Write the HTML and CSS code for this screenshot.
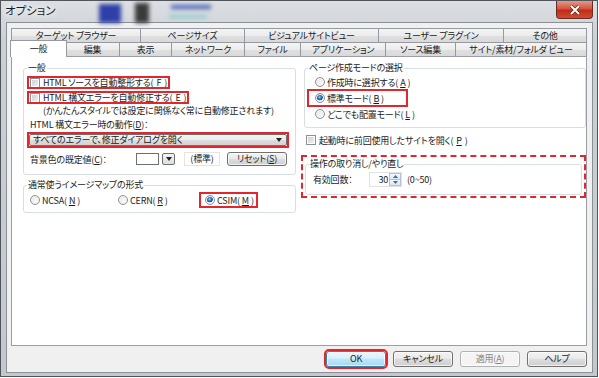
FILE: index.html
```html
<!DOCTYPE html>
<html lang="ja">
<head>
    <meta charset="UTF-8">
    <title>オプション</title>
    <link rel="stylesheet" href="styles.css">
</head>
<body>
    <div class="window">
        <!-- things seen through the glass frame -->
        <span class="behind b1"></span>
        <span class="behind b2"></span>
        <span class="behind b3"></span>
        <span class="behind b4"></span>

        <div class="titlebar">
            <span class="title">オプション</span>
            <span class="close">
                <svg width="12" height="10" viewBox="0 0 12 10"><path d="M2 1 L10 9 M10 1 L2 9" stroke="#5a1a12" stroke-width="3.2"/><path d="M2 1 L10 9 M10 1 L2 9" stroke="#fff" stroke-width="2"/></svg>
            </span>
        </div>

        <div class="client">
            <div class="tabrow back">
                <div class="tab">ターゲット ブラウザー</div>
                <div class="tab">ページサイズ</div>
                <div class="tab">ビジュアルサイトビュー</div>
                <div class="tab">ユーザー プラグイン</div>
                <div class="tab">その他</div>
            </div>
            <div class="tabrow front">
                <div class="tab active">一般</div>
                <div class="tab">編集</div>
                <div class="tab">表示</div>
                <div class="tab">ネットワーク</div>
                <div class="tab">ファイル</div>
                <div class="tab">アプリケーション</div>
                <div class="tab">ソース編集</div>
                <div class="tab">サイト/素材/フォルダ ビュー</div>
            </div>

            <div class="panel">
                <div class="col">
                    <fieldset class="group general">
                        <legend>一般</legend>
                        <div class="check mark"><i class="cb"></i>HTML ソースを自動整形する(<u>F</u>)</div>
                        <div class="check mark second"><i class="cb"></i>HTML 構文エラーを自動修正する(<u>E</u>)</div>
                        <div class="note">(かんたんスタイルでは設定に関係なく常に自動修正されます)</div>
                        <div class="caption">HTML 構文エラー時の動作(<u>D</u>)：</div>
                        <div class="select-wrap mark">
                            <div class="select">
                                <span>すべてのエラーで、修正ダイアログを開く</span>
                                <svg width="6" height="4" viewBox="0 0 6 4"><path d="M0 0 H6 L3 4 Z" fill="#222"/></svg>
                            </div>
                        </div>
                        <div class="bgrow">
                            <span class="lbl">背景色の既定値(<u>C</u>)：</span>
                            <span class="swatch"></span>
                            <span class="drop"><svg width="6" height="4" viewBox="0 0 6 4"><path d="M0 0 H6 L3 4 Z" fill="#222"/></svg></span>
                            <span class="std">(標準)</span>
                            <span class="btn reset">リセット(<u>S</u>)</span>
                        </div>
                    </fieldset>

                    <fieldset class="group map">
                        <legend>通常使うイメージマップの形式</legend>
                        <div class="radios">
                            <div class="radio"><i class="rb"></i>NCSA(<u>N</u>)</div>
                            <div class="radio"><i class="rb"></i>CERN(<u>R</u>)</div>
                            <div class="radio csim mark"><i class="rb on"></i>CSIM(<u>M</u>)</div>
                        </div>
                    </fieldset>
                </div>

                <div class="col">
                    <fieldset class="group mode">
                        <legend>ページ作成モードの選択</legend>
                        <div class="radio"><i class="rb"></i>作成時に選択する(<u>A</u>)</div>
                        <div class="radio std-mode mark"><i class="rb on"></i>標準モード(<u>B</u>)</div>
                        <div class="radio"><i class="rb"></i>どこでも配置モード(<u>L</u>)</div>
                    </fieldset>

                    <div class="check startup"><i class="cb"></i>起動時に前回使用したサイトを開く(<u>P</u>)</div>

                    <div class="dashed">
                        <fieldset class="group undo">
                            <legend>操作の取り消し/やり直し</legend>
                            <div class="undo-row">
                                <span class="lbl">有効回数：</span>
                                <span class="spin">
                                    <span class="value">30</span>
                                    <span class="arrows">
                                        <span class="up"><svg width="5" height="3" viewBox="0 0 5 3"><path d="M0 3 H5 L2.5 0 Z" fill="#3d6aa8"/></svg></span>
                                        <span class="down"><svg width="5" height="3" viewBox="0 0 5 3"><path d="M0 0 H5 L2.5 3 Z" fill="#3d6aa8"/></svg></span>
                                    </span>
                                </span>
                                <span class="range">(0~50)</span>
                            </div>
                        </fieldset>
                    </div>
                </div>
            </div>

            <div class="actions">
                <span class="btn default mark">OK</span>
                <span class="btn">キャンセル</span>
                <span class="btn disabled">適用(<u>A</u>)</span>
                <span class="btn">ヘルプ</span>
            </div>
        </div>
    </div>
</body>
</html>
```

FILE: styles.css
```css
* {
    margin: 0;
    padding: 0;
    box-sizing: border-box;
}

body {
    width: 599px;
    height: 378px;
    overflow: hidden;
    background: #fff;
    font-family: "Noto Sans CJK JP", "Noto Sans", sans-serif;
    font-size: 9px;
    letter-spacing: -0.2px;
    font-feature-settings: "palt";
    color: #1a1a1a;
}

u {
    text-underline-offset: 1px;
}

/* window frame */

.window {
    position: relative;
    width: 598px;
    height: 377px;
    border: 1px solid #50555c;
    background: linear-gradient(to bottom, #dcdfe3, #cbd0d5 40px, #c4c8ce);
    display: flex;
    flex-direction: column;
    overflow: hidden;
}

.behind {
    position: absolute;
    filter: blur(2px);
}

.b1 {
    left: 98px;
    top: 3px;
    width: 22px;
    height: 19px;
    background: #2e3fa8;
}

.b2 {
    left: 134px;
    top: 2px;
    width: 14px;
    height: 20px;
    background: #3a3a3a;
}

.b3 {
    left: 170px;
    top: 4px;
    width: 40px;
    height: 4px;
    background: #4d63b8;
}

.b4 {
    left: 168px;
    top: 14px;
    width: 38px;
    height: 3px;
    background: #8ccbcc;
}

.titlebar {
    position: relative;
    height: 21px;
    display: flex;
    justify-content: space-between;
    align-items: flex-start;
    padding: 0 4px 0 4px;
}

.title {
    font-size: 11.5px;
    letter-spacing: 0;
    line-height: 19px;
    text-shadow: 0 0 5px #fff, 0 0 8px #fff;
}

.close {
    width: 37px;
    height: 18px;
    border: 1px solid #6b2a22;
    border-top: none;
    border-radius: 0 0 4px 4px;
    background: linear-gradient(to bottom, #e3988a, #d4553f 45%, #bf2d17 55%, #cf4d33);
    display: flex;
    align-items: center;
    justify-content: center;
}

.client {
    flex: 1;
    margin: 0 4px 3px 5px;
    border: 1px solid #8b9097;
    background: #f0f0f0;
    padding: 5px 5px 0 4px;
    display: flex;
    flex-direction: column;
}

/* tabs */

.tabrow {
    display: grid;
    height: 14px;
}

.tabrow.back {
    grid-template-columns: 130px 104px 134px 125px 1fr;
}

.tabrow.front {
    grid-template-columns: 55px 54px 52px 73px 56px 85px 70px 1fr;
}

.tab {
    border: 1px solid #959aa2;
    border-bottom: none;
    background: linear-gradient(to bottom, #f4f4f4, #ececec 50%, #e0e0e0 51%, #d9d9d9);
    text-align: center;
    line-height: 13px;
    white-space: nowrap;
    overflow: hidden;
}

.tab + .tab {
    margin-left: -1px;
}

.tab.active {
    position: relative;
    z-index: 2;
    margin: -2px -1px -1px -1px;
    background: #fff;
    line-height: 16px;
}

.panel {
    flex: 1;
    border: 1px solid #9a9ea6;
    background: #fff;
    display: grid;
    grid-template-columns: 273px 1fr;
    column-gap: 5px;
    align-content: start;
    padding: 5px 0 0 11px;
}

/* group boxes */

.group {
    border: 1px solid #d5dfe5;
    border-radius: 3px;
    min-width: 0;
}

.group legend {
    padding: 0 1px;
    line-height: 12px;
}

.general {
    padding: 2px 3px 8px;
}

.map {
    margin-top: 4px;
    padding: 2px 3px 5px;
}

.mode {
    margin-left: 3px;
    padding: 0 3px 5px;
}

.undo {
    padding: 2px 3px 7px;
}

.mark {
    outline: 2px solid #e2262c;
    outline-offset: -2px;
}

/* controls */

.check,
.radio {
    display: flex;
    align-items: center;
    width: max-content;
    white-space: nowrap;
}

.check {
    height: 13px;
    gap: 3px;
    padding: 0 3px;
}

.check.second {
    margin-top: 2px;
}

.radio {
    gap: 2px;
}

.cb {
    width: 10px;
    height: 10px;
    border: 1px solid #8e8f8f;
    background: linear-gradient(135deg, #c9ccd1, #f4f4f4);
    box-shadow: inset 0 0 0 1px #fff;
}

.rb {
    width: 10px;
    height: 10px;
    border: 1px solid #8e8f8f;
    border-radius: 50%;
    background: radial-gradient(circle at 60% 60%, #fdfdfd, #d6d8db);
    box-shadow: inset 0 0 0 1px #f6f6f6;
}

.rb.on {
    background: radial-gradient(circle at 45% 40%, #9ee0ff 0, #2a7cc8 1.6px, #13508f 3px, #e9ecef 3.4px, #f6f6f6);
}

.note {
    margin-left: 16px;
    line-height: 13px;
    white-space: nowrap;
}

.caption {
    margin-top: 1px;
    padding-left: 3px;
    line-height: 13px;
}

.select-wrap {
    margin: 1px 3px 0 0;
    padding: 2px;
    height: 16px;
}

.select {
    height: 12px;
    border: 1px solid #707070;
    border-radius: 2px;
    background: linear-gradient(to bottom, #f3f3f3, #ececec 50%, #dedede 51%, #d3d3d3);
    display: flex;
    align-items: center;
    justify-content: space-between;
    padding: 0 4px 0 3px;
    line-height: 10px;
}

.bgrow {
    margin-top: 4px;
    height: 14px;
    display: flex;
    align-items: center;
    padding-left: 3px;
}

.bgrow .lbl {
    width: 106px;
}

.swatch {
    width: 23px;
    height: 12px;
    border: 1px solid #707070;
    background: #fff;
}

.drop {
    width: 13px;
    height: 12px;
    margin-left: 3px;
    border: 1px solid #707070;
    border-radius: 2px;
    background: linear-gradient(to bottom, #f3f3f3, #dedede);
    display: flex;
    align-items: center;
    justify-content: center;
}

.std {
    margin-left: 9px;
    width: 36px;
    height: 14px;
    border: 1px solid #e4e4e4;
    text-align: center;
    line-height: 12px;
}

.btn {
    display: block;
    width: 60px;
    height: 16px;
    border: 1px solid #707070;
    border-radius: 3px;
    background: linear-gradient(to bottom, #f2f2f2, #ebebeb 45%, #dddddd 50%, #cfcfcf);
    box-shadow: inset 0 0 0 1px rgba(255, 255, 255, 0.7);
    text-align: center;
    line-height: 14px;
    white-space: nowrap;
}

.btn.reset {
    margin-left: 7px;
    height: 14px;
    line-height: 12px;
}

.radios {
    display: grid;
    grid-template-columns: 88px 82px auto;
    height: 14px;
    align-items: center;
    padding-left: 3px;
}

.radio.csim {
    height: 14px;
    padding: 0 3px 0 5px;
    outline-offset: -1px;
}

.mode .radio {
    height: 16px;
    padding-left: 7px;
}

.mode .std-mode {
    width: 99px;
    outline-offset: -1px;
}

.startup {
    margin: 6px 0 0 5px;
    height: 12px;
    padding: 0;
}

.dashed {
    margin-top: 9px;
    border: 2px dashed #e2262c;
    padding: 1px 2px;
}

.undo-row {
    display: flex;
    align-items: center;
    height: 15px;
    padding-left: 4px;
}

.undo-row .lbl {
    width: 56px;
}

.spin {
    display: flex;
    height: 15px;
    border: 1px solid #e2e3ea;
}

.spin .value {
    width: 19px;
    text-align: right;
    padding-right: 1px;
    line-height: 13px;
}

.arrows {
    width: 12px;
    display: flex;
    flex-direction: column;
}

.arrows span {
    flex: 1;
    display: flex;
    align-items: center;
    justify-content: center;
    border: 1px solid #b6c2d0;
    background: linear-gradient(to bottom, #f4f7fb, #dde5ef);
}

.arrows .down {
    border-top: none;
}

.range {
    margin-left: 5px;
}

/* dialog buttons */

.actions {
    display: flex;
    justify-content: flex-end;
    gap: 7px;
    padding: 5px 0 5px;
}

.btn.default {
    border-color: #3c7fb1;
    background: linear-gradient(to bottom, #eaf6fd, #d9f0fc 45%, #bee6fd 50%, #a7d9f5);
    outline-offset: 0;
}

.btn.disabled {
    border-color: #adb2b5;
    background: #f4f4f4;
    color: #838383;
}
```
